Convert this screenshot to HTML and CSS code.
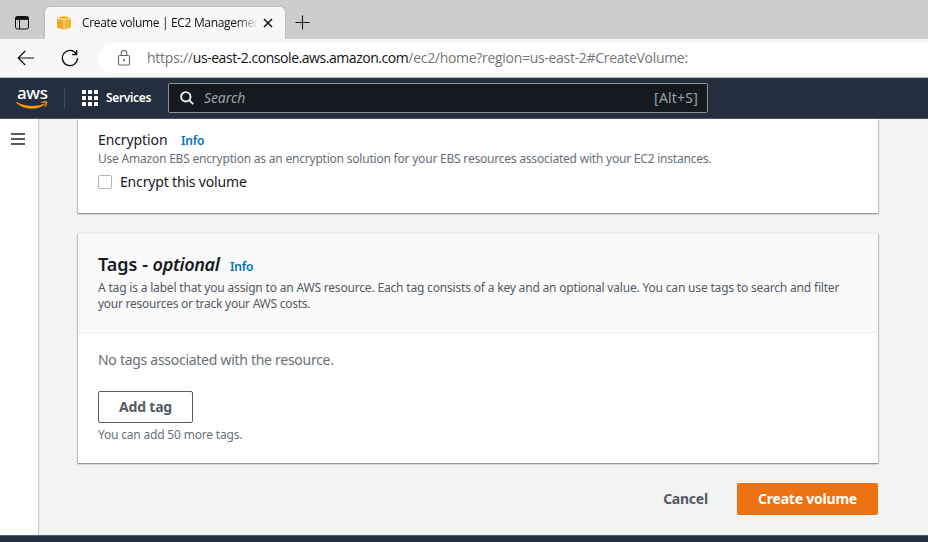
FILE: index.html
```
<!DOCTYPE html>
<html lang="en">
<head>
<meta charset="utf-8">
<title>Create volume | EC2 Management Console</title>
<link rel="stylesheet" href="styles.css">
</head>
<body>
<div class="tabstrip">
  <svg class="tab-menu" width="16" height="16" viewBox="0 0 16 16" fill="none" stroke="#111"><rect x="1.5" y="1.5" width="13" height="12.5" rx="2"/><path d="M1.5 3.3h13" stroke-width="3.2"/><path d="M5.5 4v10"/></svg>
  <div class="tab">
    <svg class="favicon" width="16" height="16" viewBox="0 0 16 16"><path d="M1 3.6 7.6 5v9.6L1 12.8z" fill="#f3a922"/><path d="M8.4 5 15 3.6v9.2l-6.6 1.8z" fill="#f5b52e"/><path d="M1.5 2.8 8 1l6.500 1.800L8 4.200z" fill="#f7ae1c"/></svg>
    <span class="tab-title">Create volume | EC2 Managemen</span>
    <svg class="tab-close" width="10" height="10" viewBox="0 0 10 10" stroke="#111" stroke-width="1.500"><path d="m1 1 8 8M9 1 1 9"/></svg>
  </div>
  <svg class="tab-new" width="15" height="15" viewBox="0 0 15 15" stroke="#111" stroke-width="1.100"><path d="M7.500 .5v14M.5 7.500h14"/></svg>
</div>
<div class="toolbar">
  <svg class="back" width="18" height="16" viewBox="0 0 18 16" fill="none" stroke="#111" stroke-width="1.200"><path d="M17 8H1.500M8.200 1 1.200 8l7 7"/></svg>
  <svg class="reload" width="18" height="18" viewBox="0 0 18 18" fill="none" stroke="#111" stroke-width="1.300"><path d="M15.500 5A7.600 7.600 0 1 0 16.600 9M15.700 1v4.500h-4.500"/></svg>
  <div class="address">
    <svg class="lock" width="14" height="17" viewBox="0 0 14 17" fill="none" stroke="#666" stroke-width="1.100"><rect x="1.500" y="5.500" width="11" height="9.500" rx="1.500"/><path d="M4.200 5.500V3.300a2.800 2.800 0 0 1 5.600 0v2.200"/><circle cx="7" cy="10.300" r=".6" fill="#666"/></svg>
    <span class="url"><span class="scheme">https://</span><span class="host">us-east-2.console.aws.amazon.com</span><span class="path">/ec2/home?region=us-east-2#CreateVolume:</span></span>
  </div>
</div>
<header class="nav">
  <div class="logo"><span class="logo-text">aws</span><svg class="smile" width="32" height="9" viewBox="0 0 32 9" fill="#f90"><path d="M.3 1.300C.5.9.9 1 1.300 1.200 9 5.800 20 6.100 28 2.800c.8-.3 1.200.4.600.9C21 9.300 8 9.200.4 2.100c-.2-.3-.3-.5-.1-.8z"/><path d="M25.400 1.200C27 .2 30.400 0 31.100.7c.6.8-.3 4.200-1.900 5.400-.3.300-.6.100-.5-.3.500-1.200 1.300-3.200.9-3.800-.5-.5-2.700-.3-3.900-.1-.5 0-.6-.4-.3-.7z"/></svg></div>
  <div class="divider"></div>
  <svg class="grid-icon" width="16" height="16" viewBox="0 0 16 16" fill="#fff"><g id="r"><rect width="4" height="4" rx=".5"/><rect x="6" width="4" height="4" rx=".5"/><rect x="12" width="4" height="4" rx=".5"/></g><use href="#r" y="6"/><use href="#r" y="12"/></svg>
  <span class="services">Services</span>
  <div class="search">
    <svg width="14" height="14" viewBox="0 0 14 14" fill="none" stroke="#eaeded" stroke-width="1.900"><circle cx="5.800" cy="5.800" r="4.700"/><path d="m9.200 9.200 4 4"/></svg>
    <span class="search-text">Search</span>
    <span class="shortcut">[Alt+S]</span>
  </div>
</header>
<div class="body">
  <aside class="side"><svg width="14" height="12" viewBox="0 0 14 12" fill="#545b64"><path d="M0 0h14v2H0zM0 5h14v2H0zM0 10h14v2H0z"/></svg></aside>
  <main class="content">
    <section class="card encryption">
      <div class="label-row"><span class="label">Encryption</span><a class="info info-label">Info</a></div>
      <p class="hint hint-enc">Use Amazon EBS encryption as an encryption solution for your EBS resources associated with your EC2 instances.</p>
      <div class="check-row"><span class="checkbox"></span><span class="check-text">Encrypt this volume</span></div>
    </section>
    <section class="card tags">
      <div class="tags-head">
        <div class="title-row"><h2><span class="title-a">Tags - </span><i>optional</i></h2><a class="info info-title">Info</a></div>
        <p class="desc"><span class="desc-a">A tag is a label that you assign to an AWS resource. Each tag consists of a key and an optional value. You can use tags to search and filter</span><br><span class="desc-b">your resources or track your AWS costs.</span></p>
      </div>
      <div class="tags-body">
        <p class="empty">No tags associated with the resource.</p>
        <button class="add">Add tag</button>
        <p class="hint hint-more">You can add 50 more tags.</p>
      </div>
    </section>
    <div class="actions"><button class="cancel">Cancel</button><button class="create">Create volume</button></div>
  </main>
</div>
<footer class="footer"></footer>
</body>
</html>
```
FILE: styles.css
```
* { box-sizing: border-box; }
body { margin: 0; width: 928px; height: 542px; overflow: hidden; display: flex; flex-direction: column; font-family: "Noto Sans", "Open Sans", sans-serif; color: #16191f; background: #f2f3f3; font-size: 14px; }
svg { display: block; flex: none; }
p, h2 { margin: 0; }
span, a, p, h2 { white-space: nowrap; }
button { font-family: inherit; padding: 0 0 2px; }

.tabstrip { flex: none; height: 39px; background: #cdcdcd; display: flex; padding-left: 14px; }
.tab-menu { margin-top: 15px; }
.tab { margin: 7px 0 0 15px; width: 240px; height: 32px; background: #f7f7f7; border-radius: 5px 5px 0 0; display: flex; align-items: center; padding-left: 11px; box-shadow: 0 0 2px rgba(0,0,0,.25); }
.tab-title { margin-left: 10px; width: 174px; font: 12px/18px "Open Sans", sans-serif; letter-spacing: -.33px; color: #111; -webkit-mask-image: linear-gradient(90deg, #000 155px, transparent 176px); mask-image: linear-gradient(90deg, #000 155px, transparent 176px); }
.tab-close { margin-left: 7px; }
.tab-new { margin: 15px 0 0 10px; }

.toolbar { flex: none; height: 39px; background: #f7f7f7; border-bottom: 1px solid #b8babc; display: flex; align-items: center; padding-left: 17px; }
.reload { margin-left: 26px; }
.address { margin-left: 19px; flex: 1; height: 30px; background: #fff; border-radius: 15px 0 0 15px; display: flex; align-items: center; padding-left: 19px; }
.url { margin-left: 16px; font: 14px/20px "Open Sans", sans-serif; color: #767676; }
.scheme { letter-spacing: -.25px; }
.host { color: #111; letter-spacing: -.45px; }
.path { letter-spacing: -.3px; }

.nav { flex: none; height: 41px; background: #232f3e; border-bottom: 1px solid #4b5561; display: flex; align-items: center; padding-left: 16px; color: #fff; }
.logo { width: 32px; height: 24px; display: flex; flex-direction: column; }
.logo-text { height: 15px; margin-left: 1px; font-size: 17px; line-height: 13px; font-weight: 500; letter-spacing: -.4px; }
.divider { width: 1px; height: 22px; background: #414d5c; margin-left: 16px; }
.grid-icon { margin-left: 17px; }
.services { margin: -1px 0 0 8px; width: 45px; font-size: 12px; font-weight: 600; letter-spacing: -.35px; }
.search { margin-left: 17px; width: 540px; height: 30px; border: 1px solid #879596; border-radius: 2px; background: #16191f; display: flex; align-items: center; padding: 0 9px 0 11px; color: #95a5a6; }
.search-text { margin: -2px 0 0 10px; font-style: italic; letter-spacing: -.1px; }
.shortcut { margin: -2px 0 0 auto; letter-spacing: .2px; }

.body { flex: none; height: 416px; display: flex; }
.side { width: 39px; background: #fff; border-right: 1px solid #c9cccc; padding: 14px 0 0 11px; }
.content { width: 889px; padding-left: 39px; background: #f2f3f3; box-shadow: inset 1px 0 0 #e9ebeb; }
.card { width: 800px; background: #fff; box-shadow: 0 1px 0 #8f9a9b, 0 1px 2px rgba(0,28,36,.25), 1px 1px 1px rgba(0,28,36,.15), -1px 1px 1px rgba(0,28,36,.15); }
.encryption { height: 94px; padding: 10px 20px 0; clip-path: inset(0 -3px -3px -3px); }
.label-row { display: flex; height: 22px; line-height: 22px; align-items: baseline; }
.label { width: 69px; letter-spacing: -.1px; }
.info { color: #0073bb; font-size: 12px; font-weight: 600; letter-spacing: -.2px; }
.info-label { margin-left: 14px; }
.hint { font-size: 12px; line-height: 16px; color: #687078; }
.hint-enc { margin-top: 0; letter-spacing: -.21px; }
.check-row { display: flex; align-items: center; height: 22px; margin-top: 4px; }
.checkbox { width: 14px; height: 14px; border: 1px solid #aab7b8; border-radius: 2px; }
.check-text { margin: -1px 0 0 8px; letter-spacing: -.17px; }
.tags { margin-top: 20px; height: 230px; }
.tags-head { height: 100px; padding: 19px 20px 0; background: #fafafa; border-top: 1px solid #eaeded; border-bottom: 1px solid #eaeded; }
.title-row { display: flex; align-items: baseline; height: 22px; line-height: 22px; }
h2 { font-size: 18px; line-height: 22px; font-weight: 600; width: 121px; }
h2 i { letter-spacing: -.35px; }
.info-title { margin-left: 11px; }
.desc { margin-top: 5px; font-size: 12px; line-height: 16px; color: #545b64; }
.desc-a { letter-spacing: -.18px; }
.desc-b { letter-spacing: -.26px; }
.tags-body { padding: 16px 20px 0; }
.empty { line-height: 22px; color: #687078; letter-spacing: -.28px; }
.add { display: block; margin-top: 20px; width: 95px; height: 32px; border: 1px solid #545b64; border-radius: 2px; background: #fff; color: #545b64; font-size: 14px; font-weight: 700; letter-spacing: -.2px; }
.hint-more { margin-top: 4px; letter-spacing: -.19px; }
.actions { width: 800px; display: flex; justify-content: flex-end; padding-top: 20px; }
.cancel { width: 87px; border: 0; background: none; font-size: 14px; font-weight: 700; color: #545b64; height: 32px; letter-spacing: -.25px; }
.create { margin-left: 8px; width: 141px; height: 32px; border: 0; border-radius: 2px; background: #ec7211; color: #fff; font-size: 14px; font-weight: 700; letter-spacing: -.22px; }
.footer { flex: none; height: 7px; background: #232f3e; border-top: 1px solid #4b5f6c; }
```
